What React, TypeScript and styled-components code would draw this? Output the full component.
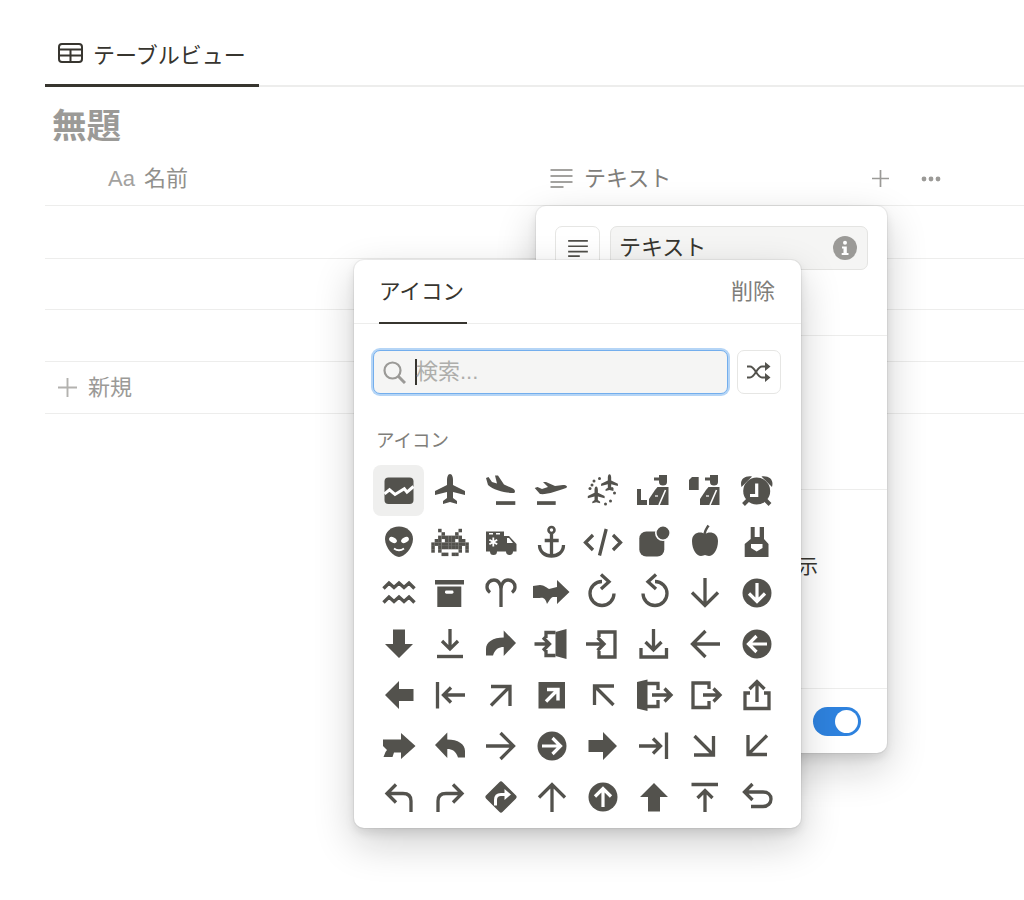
import React from 'react';
import styled, { createGlobalStyle } from 'styled-components';

const GlobalStyle = createGlobalStyle`
  html, body {
    margin: 0;
    padding: 0;
    background: #fff;
    font-family: "Liberation Sans", "Noto Sans CJK JP", sans-serif;
    color: #37352f;
  }
`;

const Page = styled.div`
  position: relative;
  width: 1024px;
  height: 900px;
  overflow: hidden;
  padding: 25px 0 0 45px;
  box-sizing: border-box;
`;
const TabBar = styled.div`
  display: flex;
  height: 62px;
  box-sizing: border-box;
  border-bottom: 2px solid #ededec;
`;
const ViewTab = styled.div`
  display: flex;
  align-items: center;
  gap: 10px;
  width: 214px;
  height: 62px;
  box-sizing: border-box;
  padding: 0 0 3px 13px;
  border-bottom: 3px solid #37352f;
  font-size: 22px;
`;
const Title = styled.h1`
  height: 65px;
  margin: 0;
  padding-left: 7px;
  font-size: 34.5px;
  line-height: 78px;
  font-weight: 700;
  color: #9b9a97;
`;
const HeaderRow = styled.div`
  display: flex;
  align-items: center;
  height: 54px;
  box-sizing: border-box;
  border-bottom: 1px solid #ededec;
  color: #91908c;
  font-size: 22px;
`;
const NameCell = styled.div`
  display: flex;
  align-items: center;
  gap: 9px;
  width: 505px;
  padding-left: 63px;
  box-sizing: border-box;
`;
const AaMark = styled.span`
  color: #a3a29f;
`;
const Raised = styled.span<{ $by?: number }>`
  padding-bottom: ${({ $by }) => $by || 6}px;
`;
const TextCell = styled.div`
  display: flex;
  align-items: center;
  gap: 11px;
  width: 322px;
  color: #7f7e7a;
`;
const HeaderAction = styled.div`
  display: flex;
  align-items: center;
  width: 49px;
`;
const Row = styled.div<{ $height?: number }>`
  height: ${({ $height }) => $height || 52}px;
  box-sizing: border-box;
  border-bottom: 1px solid #ededec;
`;
const NewRow = styled(Row)`
  display: flex;
  align-items: center;
  gap: 11px;
  padding-left: 13px;
  color: #9b9a97;
  font-size: 22px;
`;

const Popover = styled.div<{ $left: number; $top: number; $width: number; $height: number }>`
  position: absolute;
  left: ${({ $left }) => $left}px;
  top: ${({ $top }) => $top}px;
  width: ${({ $width }) => $width}px;
  height: ${({ $height }) => $height}px;
  box-sizing: border-box;
  background: #fff;
  border-radius: 10px;
  box-shadow: 0 0 0 1px rgba(15, 15, 15, 0.05), 0 5px 10px rgba(15, 15, 15, 0.1), 0 15px 40px rgba(15, 15, 15, 0.2);
  display: flex;
  flex-direction: column;
`;
const Section = styled.div<{ $height: number }>`
  height: ${({ $height }) => $height}px;
  box-sizing: border-box;
  border-bottom: 1px solid #ededec;
  &:last-child {
    border-bottom: 0;
  }
`;
const NameSection = styled(Section)`
  display: flex;
  gap: 10px;
  padding: 20px 19px 0 19px;
`;
const IconButton = styled.div`
  display: flex;
  align-items: center;
  justify-content: center;
  flex: none;
  width: 45px;
  height: 44px;
  box-sizing: border-box;
  background: #fff;
  border: 1px solid #e6e6e4;
  border-radius: 7px;
  color: #4f4e49;
`;
const ShuffleButton = styled(IconButton)`
  width: 44px;
`;
const NameField = styled.div`
  display: flex;
  align-items: center;
  justify-content: space-between;
  flex: 1;
  height: 44px;
  box-sizing: border-box;
  padding: 0 10px 0 8px;
  background: #f5f5f4;
  border: 1px solid #e4e4e2;
  border-radius: 7px;
  font-size: 22px;
`;
const OptionSection = styled(Section)`
  padding: 63px 0 0 23px;
  font-size: 20px;
  line-height: 28px;
  white-space: nowrap;
`;
const FooterSection = styled(Section)`
  display: flex;
  justify-content: flex-end;
  padding: 18px 26px 0 0;
`;
const Toggle = styled.div`
  display: flex;
  justify-content: flex-end;
  align-items: center;
  width: 48px;
  height: 29px;
  box-sizing: border-box;
  padding-right: 3px;
  border-radius: 15px;
  background: #2e82de;
`;
const Knob = styled.div`
  width: 23px;
  height: 23px;
  border-radius: 50%;
  background: #fff;
`;

const PickerTabs = styled.div`
  display: flex;
  justify-content: space-between;
  height: 64px;
  box-sizing: border-box;
  padding: 0 26px 0 25px;
  border-bottom: 1px solid #ededec;
  font-size: 22px;
`;
const PickerTab = styled.div`
  width: 88px;
  height: 64px;
  box-sizing: border-box;
  padding-top: 14px;
  line-height: 36px;
  border-bottom: 2px solid #37352f;
  font-size: 21.5px;
`;
const RemoveTab = styled.div`
  padding-top: 14px;
  line-height: 36px;
  color: #7f7e7a;
`;
const SearchRow = styled.div`
  display: flex;
  justify-content: space-between;
  margin: 26px 20px 0 19px;
`;
const SearchBox = styled.div`
  display: flex;
  align-items: center;
  width: 355px;
  height: 44px;
  box-sizing: border-box;
  padding-left: 9px;
  background: #f5f5f4;
  border: 1.5px solid #73aeed;
  border-radius: 7px;
  box-shadow: 0 0 0 2px #b5d5f6;
  font-size: 22px;
  color: #aeaeab;
`;
const Caret = styled.span`
  width: 2px;
  height: 26px;
  margin: 0 -1px 0 9px;
  background: #37352f;
`;
const GroupLabel = styled.div`
  margin: 32px 0 0 22px;
  height: 39px;
  font-size: 18.5px;
  line-height: 30px;
  color: #7f7e7a;
`;
const IconGrid = styled.div`
  display: grid;
  grid-template-columns: repeat(8, 51.15px);
  grid-auto-rows: 51px;
  margin-left: 19px;
`;
const IconCell = styled.div<{ $selected?: boolean }>`
  display: flex;
  align-items: center;
  justify-content: center;
  border-radius: 8px;
  color: #53524d;
  background: ${({ $selected }) => ($selected ? '#efefee' : 'transparent')};
  svg {
    overflow: visible;
  }
`;

const Thin = ({ d, rotate = 0, width = 3.3 }: { d: string; rotate?: number; width?: number }) => (
  <path
    d={d}
    fill="none"
    stroke="currentColor"
    strokeWidth={width}
    transform={`rotate(${rotate} 16 16)`}
  />
);
const Fill = ({ d, rotate = 0 }: { d: string; rotate?: number }) => (
  <path d={d} fill="currentColor" transform={`rotate(${rotate} 16 16)`} />
);
const Mirror = ({ children }: { children: React.ReactNode }) => (
  <g transform="translate(32 0) scale(-1 1)">{children}</g>
);

const planeD = 'M16-1c2 0 3 3 3 6v5l12 6v4l-12-3v6l4 3v3l-7-2-7 2v-3l4-3v-6l-12 3v-4l12-6V5c0-3 1-6 3-6z';
const thinArrow = 'M16 31V3.5M3 16.5 16 3.5 29 16.5';
const fatArrow = 'M16 2 30 16H22V30.5H10V16H2Z';
const diagArrow = 'M6 7.5H25V27M25 7.5 6 26.5';
const barArrow = 'M3.5 3V29.5M31 16H10M17 8.5 9.5 16 17 23.5';
const forwardD = 'M18.7 2.5 31 15 18.7 28V19C14 19 10 21 8 27.5H1V21C1 14 8 9.5 18.7 9.5Z';
const personD = 'M19.5 12H30.5V30H11V24L17 15Z';
const capD = 'M16 2.5h5V0h8V7c0 2.5-1.5 3.5-4 3.5s-4-1-4-3.5V5.5h-5z';
const redoD = 'M27 16.5A12 12 0 1 1 15 4.5M14-2.5 22 4.7 14 12';
const turnD = 'M13 3.5 4 12.5 13 21.5M4 12.5H20Q28 12.5 28 20V31';

const CircleArrow = ({ rotate }: { rotate: number }) => (
  <g transform={`rotate(${rotate} 16 16)`}>
    <circle cx="16" cy="16" r="14.5" fill="currentColor" />
    <path d="M16 26V8M8 15.5 16 7.5 24 15.5" fill="none" stroke="#fff" strokeWidth={3.2} />
  </g>
);

const Person = () => (
  <>
    <Fill d={capD} />
    <Fill d={personD} />
    <path d="M21 30 27.5 15" stroke="#fff" strokeWidth={1.6} />
    <path d="M17 21H20" stroke="#fff" strokeWidth={1.2} />
  </>
);

const invaderRows = [
  '..X.....X..',
  '...X...X...',
  '..XXXXXXX..',
  '.XX.XXX.XX.',
  'XXXXXXXXXXX',
  'X.XXXXXXX.X',
  'X.X.....X.X',
  '...XX.XX...',
];

const Invader = () => (
  <g transform="translate(-2.7 2.8)" fill="currentColor">
    {invaderRows.map((row, y) =>
      row.split('').map((c, x) => (c === 'X' ? <rect key={`${x}-${y}`} x={x * 3.4} y={y * 3.4} width={3.5} height={3.5} /> : null)),
    )}
  </g>
);

const smallPlane = (x: number, y: number) => (
  <g transform={`translate(${x} ${y}) scale(.56) translate(-16 -15)`}>
    <Fill d={planeD} />
  </g>
);

const dots: [number, number][] = [
  [7, 6], [12.5, 3.5], [3, 13.5], [5, 10], [27.5, 18], [25, 13.5], [18.5, 29], [23.5, 26],
];

const icons: React.ReactNode[] = [
  // row 1
  <>
    <rect x="1.5" y="2.5" width="29" height="26.5" rx="4" fill="currentColor" />
    <path d="M1.5 18.8 6.5 14.8 12 19.5 21.3 13.8 24 17.2 30.5 11.5" fill="none" stroke="#fff" strokeWidth={3} />
  </>,
  <Fill d={planeD} />,
  <>
    <Fill d="M1 3 3.5 2 7 7 12 8.5 10 .5h3L19 9.5 27 13c3.5 1.5 4 5 1 5C20 18 8 15 3 10Z" />
    <rect x="11" y="26.2" width="19.3" height="3.7" fill="currentColor" />
  </>,
  <>
    <Fill d="M-1.3 13 1.5 12 6 14 12 12 7 7h3L19 11 27 10C31 10 32 12 30 13 22 16 10 20 4 19Z" />
    <rect x="1" y="26.2" width="18.7" height="3.7" fill="currentColor" />
  </>,
  <>
    {smallPlane(22.5, 8.2)}
    {smallPlane(9.2, 20.5)}
    {dots.map(([x, y]) => (
      <circle key={`${x}-${y}`} cx={x} cy={y} r="1.5" fill="currentColor" />
    ))}
  </>,
  <>
    <Person />
    <Fill d="M-1 14h4v11h6v5H-1Z" />
  </>,
  <>
    <Person />
    <Fill d="M0 5 3 2H9.7V15H0Z" />
  </>,
  <>
    <circle cx="15.7" cy="16" r="13.5" fill="currentColor" />
    <Fill d="M.5 12C-1.5 5 3 .5 11 1.5ZM31 12C33 5 28.5 .5 20.5 1.5Z" />
    <Thin d="M7 25 2.5 29.5M24.5 25 29 29.5" width={4} />
    <path d="M15.7 8.5V20.5H9" fill="none" stroke="#fff" strokeWidth={3.2} />
  </>,
  // row 2
  <>
    <Fill d="M16 .5C24 .5 30 6 30 13 30 22 21 31 16 31 11 31 2 22 2 13 2 6 8 .5 16 .5Z" />
    <ellipse cx="10" cy="14" rx="4.2" ry="2.6" fill="#fff" transform="rotate(30 10 14)" />
    <ellipse cx="22" cy="14" rx="4.2" ry="2.6" fill="#fff" transform="rotate(-30 22 14)" />
    <path d="M11 22.5Q16 26 21 22.5" fill="none" stroke="#fff" strokeWidth={1.8} />
  </>,
  <Invader />,
  <>
    <Fill d="M1 5.5H19V10H24L31.5 18V25.5H28a3.5 3.5 0 0 1-7 0H12a3.5 3.5 0 0 1-7 0H1Z" />
    <path d="M22 12h2l4 5h-6Z" fill="#fff" />
    <path d="M8.3 11.5V20.5M4.4 13.7 12.2 18.3M12.2 13.7 4.4 18.3" stroke="#fff" strokeWidth={1.8} />
    <path d="M4 7.8H8M11 7.8H15" stroke="#fff" strokeWidth={1.4} />
  </>,
  <>
    <circle cx="15.5" cy="4" r="3" fill="none" stroke="currentColor" strokeWidth={2.6} />
    <Thin d="M15.5 7V30M8.7 14.5H22.7M3.5 19C3.5 26 9 30 15.5 30 22 30 27.5 26 27.5 19" />
  </>,
  <Thin d="M6 9-1.5 16.5 6 24M19.2 3 12.5 29.5M26 9 33.5 16.5 26 24" />,
  <>
    <rect x="1.3" y="5.5" width="25" height="25" rx="7" fill="currentColor" />
    <circle cx="25" cy="7" r="7.2" fill="currentColor" stroke="#fff" strokeWidth={1.6} />
  </>,
  <>
    <Fill d="M16 8C20 5 29 6 29 15 29 24 24 30 20 30 18 30 17 29 16 29 15 29 14 30 12 30 8 30 3 24 3 15 3 6 12 5 16 8Z" />
    <Thin d="M15.5 8C16 4 18 2 19.5-.5" width={2.5} />
  </>,
  <>
    <Fill d="M9.7 1h4V11h5V1H23V13L27.5 18V31H3.7V18L9.7 13Z" />
    <path d="M10 18H21.5V22L15.7 25.5 10 22Z" fill="#fff" />
  </>,
  // row 3
  <Thin d="M.5 11.5 6 6 11 10.5 16 6 21 10.5 26 6 31.5 11.5M.5 25.5 6 20 11 24.5 16 20 21 24.5 26 20 31.5 25.5" width={3.4} />,
  <>
    <rect x="1" y="3" width="29" height="4.5" fill="currentColor" />
    <Fill d="M3.3 9.5H27.3V30H3.3Z" />
    <rect x="11" y="13.5" width="8.5" height="3.2" rx="1.4" fill="#fff" />
  </>,
  <Thin d="M16 30V12C16 7 13 3 9 3 5 3 2 6 2 10 2 12.5 3 14 5 15.5M16 12C16 7 19 3 23 3 27 3 30 6 30 10 30 12.5 29 14 27 15.5" />,
  <Fill d="M-3 9 4 8C8 8 11 11 13 12L21 10V3L33.5 15 21 27V20H17C15 20 13 24 11 27 10 23 8 20 4 21L-3 21Z" />,
  <Thin d={redoD} />,
  <Mirror>
    <Thin d={redoD} />
  </Mirror>,
  <Thin d={thinArrow} rotate={180} />,
  <CircleArrow rotate={180} />,
  // row 4
  <Fill d={fatArrow} rotate={180} />,
  <>
    <Thin d="M16 1V21M8 13 16 21 24 13" />
    <rect x="3" y="26.8" width="26" height="3.4" fill="currentColor" />
  </>,
  <Fill d={forwardD} />,
  <>
    <Fill d="M19.5 4 30.5 1V31L19.5 28Z" />
    <Thin d="M19.5 4.5H10V10M19.5 27.5H10V22M-1.5 16H13M7 9.5 13.5 16 7 22.5" />
  </>,
  <Thin d="M12 9V4H28V29H12V23M-1 16H17M10.5 9.5 17 16 10.5 22.5" />,
  <Thin d="M15.5 1V22M7.5 14 15.5 22 23.5 14M3 20V29H28.5V20" />,
  <Thin d={thinArrow} rotate={-90} />,
  <CircleArrow rotate={-90} />,
  // row 5
  <Fill d={fatArrow} rotate={-90} />,
  <Thin d={barArrow} />,
  <Thin d={diagArrow} />,
  <>
    <rect x="2.5" y="3" width="26.5" height="26.5" fill="currentColor" />
    <path d="M11 10.5H22V21.5M22 10.5 10 22.5" fill="none" stroke="#fff" strokeWidth={3.4} />
  </>,
  <Thin d={diagArrow} rotate={-90} />,
  <>
    <Fill d="M-1 3 9.5 .5V32L-1 29.5Z" />
    <Thin d="M9 4.5H20V11M9 27.5H20V21M14 16H33M26.5 9.5 33 16 26.5 22.5" />
  </>,
  <Thin d="M20 10V4H4V28.5H20V22M14 16H31M24.5 9.5 31 16 24.5 22.5" />,
  <Thin d="M9 14H4V29.5H28V14H23M16 23V2.5M8.5 10 16 2.5 23.5 10" />,
  // row 6
  <Fill d="M18 3 32.5 16 18 29V22.5H11L9.5 27H.5L2.5 22 4 20 0 16V9.5H18Z" />,
  <Mirror>
    <Fill d={forwardD} />
  </Mirror>,
  <Thin d={thinArrow} rotate={90} />,
  <CircleArrow rotate={90} />,
  <Fill d={fatArrow} rotate={90} />,
  <Thin d={barArrow} rotate={180} />,
  <Thin d={diagArrow} rotate={90} />,
  <Thin d={diagArrow} rotate={180} />,
  // row 7
  <Thin d={turnD} />,
  <Mirror>
    <Thin d={turnD} />
  </Mirror>,
  <>
    <Fill d="M14.3 1.2a2.4 2.4 0 0 1 3.4 0L30.8 14.3a2.4 2.4 0 0 1 0 3.4L17.7 30.8a2.4 2.4 0 0 1-3.4 0L1.2 17.7a2.4 2.4 0 0 1 0-3.4Z" />
    <path d="M10.5 24.5V19C10.5 15 13 13.5 16 13.5H21" fill="none" stroke="#fff" strokeWidth={3} />
    <path d="M19.5 8 26 13.5 19.5 19Z" fill="#fff" />
  </>,
  <Thin d={thinArrow} />,
  <CircleArrow rotate={0} />,
  <Fill d={fatArrow} />,
  <Thin d={barArrow} rotate={90} />,
  <Thin d="M11.5 3 3.5 11 11.5 19M3.5 11H22C27 11 30 14 30 18 30 22 27 25.5 22 25.5H10" />,
];

const TableIcon = () => (
  <svg width="25" height="20" viewBox="0 0 25 20" fill="none" stroke="#37352f" strokeWidth="2">
    <rect x="1" y="1" width="23" height="18" rx="3" />
    <path d="M1 6.5H24M1 12.5H24M12.5 6.5V19" />
  </svg>
);
const LinesIcon = ({ width, height, color, weight }: { width: number; height: number; color: string; weight: number }) => (
  <svg width={width} height={height} viewBox="0 0 22 19" fill="none" stroke={color} strokeWidth={weight}>
    <path d="M0 1H22M0 7H22M0 13H22M0 18H13" />
  </svg>
);
const PlusIcon = ({ size, color }: { size: number; color: string }) => (
  <svg width={size} height={size} viewBox="0 0 18 18" fill="none" stroke={color} strokeWidth="1.8">
    <path d="M9 0V18M0 9H18" />
  </svg>
);
const DotsIcon = () => (
  <svg width="20" height="6" viewBox="0 0 20 6" fill="#9b9a97">
    <circle cx="3" cy="3" r="2.4" />
    <circle cx="10" cy="3" r="2.4" />
    <circle cx="17" cy="3" r="2.4" />
  </svg>
);
const InfoIcon = () => (
  <svg width="24" height="24" viewBox="0 0 24 24">
    <circle cx="12" cy="12" r="12" fill="#9b9a97" />
    <circle cx="12" cy="6.7" r="2" fill="#fff" />
    <path d="M9 10.5H13.8V17H15.5V19H8.7V17H10.5V12.5H9Z" fill="#fff" />
  </svg>
);
const SearchIcon = () => (
  <svg width="23" height="23" viewBox="0 0 23 23" fill="none" stroke="#9b9a97" strokeWidth="2.2">
    <circle cx="9.5" cy="9.5" r="8" />
    <path d="M15.5 15.5 22 22" strokeWidth="3" />
  </svg>
);
const ShuffleIcon = () => (
  <svg width="24" height="20" viewBox="0 0 24 20">
    <path
      d="M0 4.5H3C8 4.5 10 15.5 15 15.5H19M0 15.5H3C8 15.5 10 4.5 15 4.5H19"
      fill="none"
      stroke="#53524d"
      strokeWidth="2"
    />
    <path d="M18 0 23.5 4.5 18 9ZM18 11 23.5 15.5 18 20Z" fill="#53524d" />
  </svg>
);

const App: React.FC = () => (
  <>
    <GlobalStyle />
    <Page>
      <TabBar>
        <ViewTab>
          <TableIcon />
          テーブルビュー
        </ViewTab>
      </TabBar>
      <Title>無題</Title>
      <HeaderRow>
        <NameCell>
          <AaMark>Aa</AaMark>
          <Raised>名前</Raised>
        </NameCell>
        <TextCell>
          <LinesIcon width={23} height={19} color="#a3a29f" weight={1.8} />
          <Raised>テキスト</Raised>
        </TextCell>
        <HeaderAction>
          <PlusIcon size={17} color="#9b9a97" />
        </HeaderAction>
        <HeaderAction>
          <DotsIcon />
        </HeaderAction>
      </HeaderRow>
      <Row $height={53} />
      <Row $height={51} />
      <Row />
      <NewRow>
        <PlusIcon size={19} color="#b3b2af" />
        <Raised>新規</Raised>
      </NewRow>

      <Popover $left={536} $top={206} $width={351} $height={547}>
        <NameSection $height={130}>
          <IconButton>
            <LinesIcon width={20} height={17} color="#4f4e49" weight={1.8} />
          </IconButton>
          <NameField>
            <Raised>テキスト</Raised>
            <InfoIcon />
          </NameField>
        </NameSection>
        <Section $height={154} />
        <OptionSection $height={199}>列ヘッダーにアイコンを表示</OptionSection>
        <FooterSection $height={64}>
          <Toggle>
            <Knob />
          </Toggle>
        </FooterSection>
      </Popover>

      <Popover $left={354} $top={260} $width={447} $height={568}>
        <PickerTabs>
          <PickerTab>アイコン</PickerTab>
          <RemoveTab>削除</RemoveTab>
        </PickerTabs>
        <SearchRow>
          <SearchBox>
            <SearchIcon />
            <Caret />
            <Raised>検索...</Raised>
          </SearchBox>
          <ShuffleButton>
            <ShuffleIcon />
          </ShuffleButton>
        </SearchRow>
        <GroupLabel>アイコン</GroupLabel>
        <IconGrid>
          {icons.map((icon, i) => (
            <IconCell key={i} $selected={i === 0}>
              <svg width="32" height="32" viewBox="0 0 32 32">
                {icon}
              </svg>
            </IconCell>
          ))}
        </IconGrid>
      </Popover>
    </Page>
  </>
);

export default App;
